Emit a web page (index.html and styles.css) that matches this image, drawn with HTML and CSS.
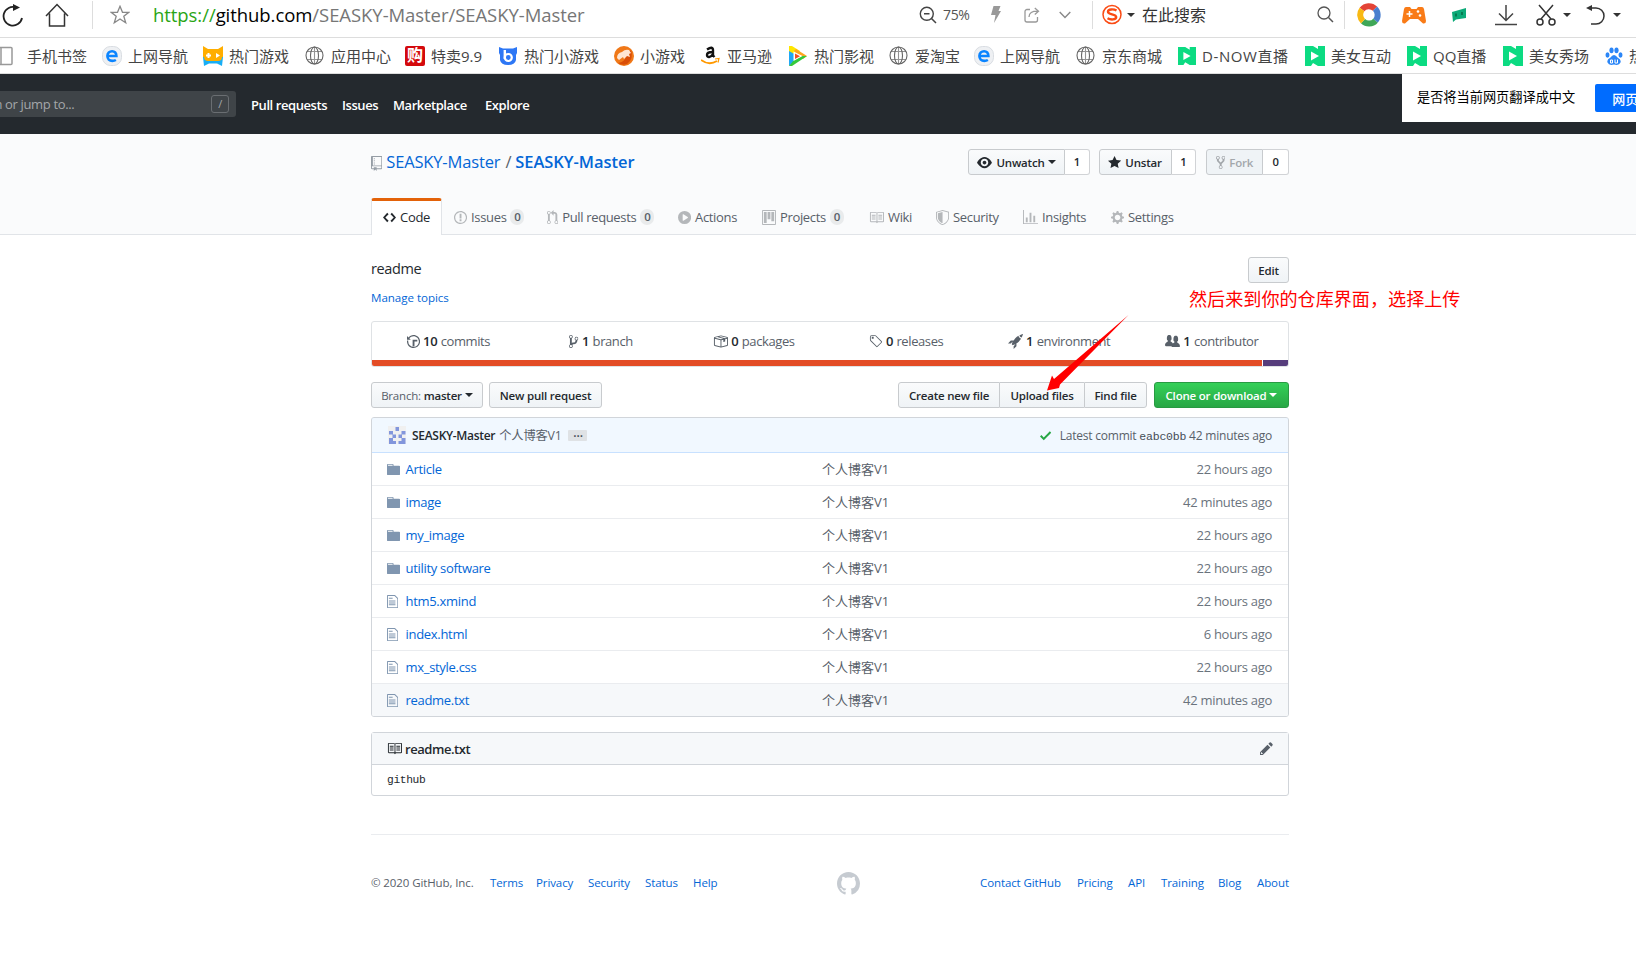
FILE: index.html
```html
<!DOCTYPE html>
<html lang="en">
<head>
    <meta charset="utf-8">
    <title>SEASKY-Master/SEASKY-Master</title>
    <link rel="stylesheet" href="styles.css">
</head>
<body>
    <svg class="sprite">
        <symbol id="repo" viewBox="0 0 12 16"><path d="M4 9H3V8h1v1zm0-3H3v1h1V6zm0-2H3v1h1V4zm0-2H3v1h1V2zm8-1v12c0 .55-.45 1-1 1H6v2l-1.500-1.500L3 16v-2H1c-.55 0-1-.45-1-1V1c0-.55.45-1 1-1h10c.55 0 1 .45 1 1zm-1 10H1v2h2v-1h3v1h5v-2zm0-10H2v9h9V1z"/></symbol>
        <symbol id="code" viewBox="0 0 14 16"><path d="M9.500 3L8 4.500 11.500 8 8 11.500 9.500 13 14 8 9.500 3zm-5 0L0 8l4.500 5L6 11.500 2.500 8 6 4.500 4.500 3z"/></symbol>
        <symbol id="issue" viewBox="0 0 14 16"><path d="M7 2.300c3.140 0 5.700 2.560 5.700 5.700s-2.560 5.700-5.700 5.700A5.710 5.710 0 0 1 1.300 8c0-3.140 2.560-5.700 5.700-5.700zM7 1C3.140 1 0 4.140 0 8s3.140 7 7 7 7-3.140 7-7-3.140-7-7-7zm1 3H6v5h2V4zm0 6H6v2h2v-2z"/></symbol>
        <symbol id="pull" viewBox="0 0 12 16"><path d="M11 11.280V5c-.03-.78-.34-1.470-.94-2.060C9.460 2.350 8.780 2.030 8 2H7V0L4 3l3 3V4h1c.27.02.48.11.69.31.21.2.3.42.31.69v6.280A1.993 1.993 0 0 0 10 15a1.993 1.993 0 0 0 1-3.720zm-1 2.920c-.66 0-1.200-.55-1.200-1.200 0-.65.55-1.200 1.200-1.200.65 0 1.200.55 1.200 1.200 0 .65-.55 1.200-1.200 1.200zM4 3c0-1.110-.89-2-2-2a1.993 1.993 0 0 0-1 3.720v6.560A1.993 1.993 0 0 0 2 15a1.993 1.993 0 0 0 1-3.720V4.720c.59-.34 1-.98 1-1.720zm-.8 10c0 .66-.55 1.200-1.200 1.200-.65 0-1.200-.55-1.200-1.200 0-.65.55-1.200 1.200-1.200.65 0 1.200.55 1.200 1.200zM2 4.200C1.340 4.200.8 3.650.8 3c0-.65.55-1.200 1.200-1.200.65 0 1.200.55 1.200 1.200 0 .65-.55 1.200-1.200 1.200z"/></symbol>
        <symbol id="play" viewBox="0 0 14 16"><path fill-rule="evenodd" d="M14 8A7 7 0 1 1 0 8a7 7 0 0 1 14 0zm-8.223 3.482l4.599-3.066a.5.5 0 0 0 0-.832L5.777 4.518A.5.5 0 0 0 5 4.934v6.132a.5.5 0 0 0 .777.416z"/></symbol>
        <symbol id="project" viewBox="0 0 15 16"><path fill-rule="evenodd" d="M10 12h3V2h-3v10zm-4-2h3V2H6v8zm-4 4h3V2H2v12zm-1 1h13V1H1v14zM14 0H1a1 1 0 0 0-1 1v14a1 1 0 0 0 1 1h13a1 1 0 0 0 1-1V1a1 1 0 0 0-1-1z"/></symbol>
        <symbol id="book" viewBox="0 0 16 16"><path fill-rule="evenodd" d="M3 5h4v1H3V5zm0 3h4V7H3v1zm0 2h4V9H3v1zm11-5h-4v1h4V5zm0 2h-4v1h4V7zm0 2h-4v1h4V9zm2-6v9c0 .55-.45 1-1 1H9.500l-1 1-1-1H2c-.55 0-1-.45-1-1V3c0-.55.45-1 1-1h5.500l1 1 1-1H15c.55 0 1 .45 1 1zm-8 .5L7.500 3H2v9h6V3.500zm7-.5H9.500l-.5.5V12h6V3z"/></symbol>
        <symbol id="shield" viewBox="0 0 14 16"><path fill-rule="evenodd" d="M0 2l7-2 7 2v6.020C14 12.690 8.690 16 7 16c-1.690 0-7-3.310-7-7.980V2zm1 .75L7 1l6 1.750v5.268C13 12.104 8.449 15 7 15c-1.449 0-6-2.896-6-6.982V2.750zm1 .75L7 2v12c-1.207 0-5-2.482-5-5.985V3.500z"/></symbol>
        <symbol id="graph" viewBox="0 0 16 16"><path d="M16 14v1H0V0h1v14h15zM5 13H3V8h2v5zm4 0H7V3h2v10zm4 0h-2V6h2v7z"/></symbol>
        <symbol id="gear" viewBox="0 0 14 16"><path fill-rule="evenodd" d="M14 8.770v-1.600l-1.940-.64-.45-1.090.88-1.840-1.130-1.130-1.810.91-1.090-.45-.69-1.920h-1.600l-.63 1.940-1.110.45-1.840-.88-1.130 1.130.91 1.810-.45 1.090L0 7.230v1.590l1.940.64.45 1.090-.88 1.840 1.130 1.130 1.810-.91 1.090.45.69 1.920h1.590l.63-1.940 1.110-.45 1.840.88 1.130-1.130-.92-1.810.47-1.090L14 8.750v.02zM7 11c-1.660 0-3-1.340-3-3s1.340-3 3-3 3 1.340 3 3-1.340 3-3 3z"/></symbol>
        <symbol id="eye" viewBox="0 0 16 16"><path fill-rule="evenodd" d="M8.060 2C3 2 0 8 0 8s3 6 8.060 6C13 14 16 8 16 8s-3-6-7.940-6zM8 12c-2.200 0-4-1.780-4-4 0-2.200 1.800-4 4-4 2.220 0 4 1.800 4 4 0 2.220-1.780 4-4 4zm2-4c0 1.110-.89 2-2 2-1.110 0-2-.89-2-2 0-1.110.89-2 2-2 1.110 0 2 .89 2 2z"/></symbol>
        <symbol id="star" viewBox="0 0 14 16"><path d="M14 6l-4.900-.64L7 1 4.900 5.360 0 6l3.600 3.260L2.670 14 7 11.670 11.330 14l-.93-4.740L14 6z"/></symbol>
        <symbol id="fork" viewBox="0 0 10 16"><path d="M8 1a1.993 1.993 0 0 0-1 3.720V6L5 8 3 6V4.720A1.993 1.993 0 0 0 2 1a1.993 1.993 0 0 0-1 3.720V6.500l3 3v1.780A1.993 1.993 0 0 0 5 15a1.993 1.993 0 0 0 1-3.720V9.500l3-3V4.720A1.993 1.993 0 0 0 8 1zM2 4.200C1.340 4.200.8 3.650.8 3c0-.65.55-1.200 1.200-1.200.65 0 1.200.55 1.200 1.200 0 .65-.55 1.200-1.200 1.200zm3 10c-.66 0-1.200-.55-1.200-1.200 0-.65.55-1.200 1.200-1.200.65 0 1.200.55 1.200 1.200 0 .65-.55 1.200-1.200 1.200zm3-10c-.66 0-1.200-.55-1.200-1.200 0-.65.55-1.200 1.200-1.200.65 0 1.200.55 1.200 1.200 0 .65-.55 1.200-1.200 1.200z"/></symbol>
        <symbol id="history" viewBox="0 0 14 16"><path d="M8 13H6V6h5v2H8v5zM7 1C4.810 1 2.870 2.020 1.590 3.590L0 2v4h4L2.500 4.500C3.550 3.170 5.170 2.300 7 2.300c3.140 0 5.700 2.560 5.700 5.700s-2.560 5.700-5.700 5.700A5.710 5.710 0 0 1 1.300 8c0-.34.03-.67.09-1H.08C.03 7.330 0 7.660 0 8c0 3.860 3.140 7 7 7s7-3.140 7-7-3.140-7-7-7z"/></symbol>
        <symbol id="branch" viewBox="0 0 10 16"><path d="M10 5c0-1.110-.89-2-2-2a1.993 1.993 0 0 0-1 3.720v.3c-.02.52-.23.98-.63 1.380-.4.4-.86.61-1.380.63-.83.02-1.480.16-2 .45V4.720a1.993 1.993 0 0 0-1-3.720C.88 1 0 1.890 0 3a2 2 0 0 0 1 1.720v6.560c-.59.35-1 .99-1 1.720 0 1.110.89 2 2 2 1.110 0 2-.89 2-2 0-.53-.2-1-.53-1.360.09-.06.48-.41.59-.47.25-.11.56-.17.94-.17 1.050-.05 1.950-.45 2.750-1.250S8.950 7.770 9 6.730h-.02C9.590 6.370 10 5.730 10 5zM2 1.800c.66 0 1.200.55 1.200 1.200 0 .65-.55 1.200-1.200 1.200C1.350 4.200.8 3.650.8 3c0-.65.55-1.200 1.200-1.200zm0 12.410c-.66 0-1.200-.55-1.200-1.200 0-.65.55-1.200 1.200-1.200.65 0 1.200.55 1.200 1.200 0 .65-.55 1.200-1.200 1.200zm6-8c-.66 0-1.200-.55-1.200-1.200 0-.65.55-1.200 1.200-1.200.65 0 1.200.55 1.200 1.200 0 .65-.55 1.200-1.200 1.200z"/></symbol>
        <symbol id="package" viewBox="0 0 16 16"><path fill-rule="evenodd" d="M1 4.270v7.470c0 .45.3.84.75.97l6.500 1.730c.16.05.34.05.5 0l6.500-1.730c.45-.13.75-.52.75-.97V4.270c0-.45-.3-.84-.75-.97l-6.500-1.740a1.400 1.400 0 0 0-.5 0L1.750 3.300c-.45.13-.75.52-.75.97zm7 9.090l-6-1.590V5l6 1.610v6.750zM2 4l2.500-.67L11 5.060l-2.500.67L2 4zm13 7.770l-6 1.590V6.610l2-.55V8.500l2-.53V5.530L15 5v6.770zm-2-7.240L6.500 2.800l2-.53L15 4l-2 .53z"/></symbol>
        <symbol id="tag" viewBox="0 0 14 16"><path fill-rule="evenodd" d="M7.685 1.720a2.490 2.490 0 0 0-1.760-.726H3.480A2.500 2.500 0 0 0 .994 3.480v2.456c0 .656.269 1.292.726 1.760l6.024 6.024a.99.99 0 0 0 1.402 0l4.563-4.563a.99.99 0 0 0 0-1.402L7.685 1.720zM2.366 7.048A1.540 1.540 0 0 1 1.900 5.925V3.480c0-.874.716-1.580 1.580-1.580h2.456c.418 0 .825.159 1.123.467l6.104 6.094-4.702 4.702-6.094-6.114zm.626-4.066h1.989v1.989H2.982V2.982h.01z"/></symbol>
        <symbol id="rocket" viewBox="0 0 16 16"><path d="M12.170 3.830c-.27-.27-.47-.55-.63-.88-.16-.31-.27-.66-.34-1.020-.58.33-1.160.7-1.730 1.130-.58.44-1.140.94-1.690 1.480-.7.7-1.330 1.810-1.780 2.450H3L0 10h3l2-2c-.34.77-1.020 2.980-1 3l1 1c.02.02 2.230-.64 3-1l-2 2v3l3-3v-3c.64-.45 1.750-1.090 2.450-1.780.55-.55 1.050-1.130 1.470-1.700.44-.58.81-1.160 1.140-1.720-.36-.08-.7-.19-1.030-.34a3.390 3.390 0 0 1-.86-.63zM16 0s-.09.38-.3 1.060c-.2.7-.55 1.580-1.060 2.660-.7-.08-1.270-.33-1.660-.72-.39-.39-.63-.94-.7-1.640C13.360.84 14.230.48 14.920.28 15.620.08 16 0 16 0z"/></symbol>
        <symbol id="people" viewBox="0 0 16 16"><path d="M16 12.999c0 .439-.45 1-1 1H7.995c-.539 0-.994-.447-.995-.999H1c-.54 0-1-.561-1-1 0-2.634 3-4 3-4s.229-.409 0-1c-.841-.621-1.058-.59-1-3 .058-2.419 1.367-3 2.500-3s2.442.58 2.500 3c.058 2.410-.159 2.379-1 3-.229.59 0 1 0 1s1.549.711 2.420 2.088C9.196 9.369 10 8.999 10 8.999s.229-.409 0-1c-.841-.62-1.058-.59-1-3 .058-2.419 1.367-3 2.500-3s2.437.581 2.495 3c.059 2.410-.158 2.380-1 3-.229.59 0 1 0 1s3.005 1.366 3.005 4z"/></symbol>
        <symbol id="check" viewBox="0 0 12 16"><path d="M12 5l-8 8-4-4 1.500-1.500L4 10l6.500-6.500L12 5z"/></symbol>
        <symbol id="folder" viewBox="0 0 14 16"><path fill-rule="evenodd" d="M13 4H7V3c0-.66-.31-1-1-1H1c-.55 0-1 .45-1 1v10c0 .55.45 1 1 1h12c.55 0 1-.45 1-1V5c0-.55-.45-1-1-1zM6 4H1V3h5v1z"/></symbol>
        <symbol id="file" viewBox="0 0 12 16"><path fill-rule="evenodd" d="M6 5H2V4h4v1zM2 8h7V7H2v1zm0 2h7V9H2v1zm0 2h7v-1H2v1zm10-7.500V14c0 .55-.45 1-1 1H1c-.55 0-1-.45-1-1V2c0-.55.45-1 1-1h7.500L12 4.500zM11 5L8 2H1v12h10V5z"/></symbol>
        <symbol id="pencil" viewBox="0 0 14 16"><path fill-rule="evenodd" d="M0 12v3h3l8-8-3-3-8 8zm3 2H1v-2h1v1h1v1zm10.300-9.300L12 6 9 3l1.300-1.300a.996.996 0 0 1 1.410 0l1.590 1.590c.39.39.39 1.020 0 1.410z"/></symbol>
        <symbol id="github" viewBox="0 0 16 16"><path d="M8 0C3.580 0 0 3.580 0 8c0 3.540 2.290 6.530 5.470 7.590.4.07.55-.17.55-.38 0-.19-.01-.82-.01-1.490-2.010.37-2.530-.49-2.690-.94-.09-.23-.48-.94-.82-1.130-.28-.15-.68-.52-.01-.53.63-.01 1.080.58 1.230.82.72 1.210 1.870.87 2.330.66.07-.52.28-.87.51-1.070-1.780-.2-3.640-.89-3.640-3.950 0-.87.31-1.590.82-2.150-.08-.2-.36-1.020.08-2.120 0 0 .67-.21 2.200.82.64-.18 1.320-.27 2-.27.68 0 1.360.09 2 .27 1.530-1.040 2.200-.82 2.200-.82.44 1.100.16 1.920.08 2.120.51.56.82 1.270.82 2.150 0 3.070-1.870 3.750-3.650 3.950.29.25.54.73.54 1.480 0 1.070-.01 1.930-.01 2.200 0 .21.15.46.55.38A8.013 8.013 0 0 0 16 8c0-4.420-3.580-8-8-8z"/></symbol>
        <symbol id="globe" viewBox="0 0 20 20"><g fill="none" stroke="#666" stroke-width="1.100"><circle cx="9.500" cy="9.500" r="8.500"/><ellipse cx="9.500" cy="9.500" rx="4" ry="8.500"/><path d="M9.500 1v17M2 5.500h15M2 13.500h15" stroke-opacity=".7"/></g></symbol>
        <symbol id="edge" viewBox="0 0 20 20"><rect x=".5" y=".5" width="19" height="19" rx="8" fill="#eef0f3" stroke="#d9dde2"/><path d="M5.600 10h8.800c0-3-1.800-4.800-4.300-4.800S5.400 7.200 5.400 10s2 4.900 4.900 4.900c1.400 0 2.600-.3 3.600-.9" fill="none" stroke="#0a84ff" stroke-width="2.600"/></symbol>
        <symbol id="nlive" viewBox="0 0 20 20"><path d="M0 0h8l5 3V0h7v20h-7l-5-3-2 3H0z" fill="#0cdb82"/><path d="M6 5.500l8 4.500-8 4.500z" fill="#fff"/></symbol>
    </svg>

    <div class="address-bar">
        <div><svg class="ic-refresh" viewBox="0 0 22 24"><path d="M14 4.500A9.300 9.300 0 1 0 20 15" fill="none" stroke="#222" stroke-width="1.800"/><path d="M11 1l7 3.500-7 3.500z" fill="#222"/></svg></div>
        <div><svg width="24" height="24" viewBox="0 0 24 24"><path d="M1 13L12 1.500 23 13M4.500 10.500v12.500h15V10.500" fill="none" stroke="#333" stroke-width="1.500"/></svg></div>
        <div class="divider"></div>
        <div><svg width="20" height="20" viewBox="0 0 20 20"><path d="M10 1.300l2.500 6h6.300l-5 4 1.900 6.500L10 14l-5.700 3.800 1.900-6.500-5-4h6.300z" fill="none" stroke="#888" stroke-width="1.300"/></svg></div>
        <div class="url"><span class="scheme">https://</span><span class="host">github.com</span>/SEASKY-Master/SEASKY-Master</div>
        <div><svg width="18" height="18" viewBox="0 0 18 18"><path d="M12.500 12.500L17 17M5 7.800h5.500" stroke="#444" stroke-width="1.500"/><circle cx="7.800" cy="7.800" r="6.500" fill="none" stroke="#444" stroke-width="1.400"/></svg></div>
        <div class="zoom">75%</div>
        <div><svg width="10" height="17" viewBox="0 0 10 17"><path d="M2.500 0h7L7.500 5H10L3 17l1.500-8H0z" fill="#999"/></svg></div>
        <div><svg width="16" height="16" viewBox="0 0 16 16"><path d="M6 2.500H3a2 2 0 0 0-2 2V13a2 2 0 0 0 2 2h8.500a2 2 0 0 0 2-2v-3M5 10c0-4 3-6 9-5.800M10.800 1l3.700 3.300-3.700 3.300" fill="none" stroke="#999" stroke-width="1.300"/></svg></div>
        <div><svg width="12" height="8" viewBox="0 0 12 8"><path d="M.7 1L6 6.500 11.300 1" fill="none" stroke="#888" stroke-width="1.400"/></svg></div>
        <div class="divider"></div>
        <div class="sogou"><svg width="20" height="21" viewBox="0 0 20 21"><circle cx="10" cy="10.500" r="9" fill="none" stroke="#fa4b14" stroke-width="1.500"/><path d="M14.500 6.500C12 5 6 4.800 6 7.700c0 3.200 8.200 2 8.200 5.300 0 3-5.700 3-8.700 1.200" fill="none" stroke="#fa4b14" stroke-width="2.400"/></svg><i class="caret"></i></div>
        <div class="search-hint">在此搜索</div>
        <div><svg width="17" height="17" viewBox="0 0 17 17"><circle cx="7" cy="7" r="6" fill="none" stroke="#555" stroke-width="1.300"/><path d="M11.500 11.500l4.500 4.500" stroke="#555" stroke-width="1.500"/></svg></div>
        <div class="divider"></div>
        <div><svg width="24" height="24" viewBox="0 0 24 24"><g fill="none" stroke-width="6"><path d="M5 6.500A8.700 8.700 0 0 1 18 5.700" stroke="#e34336"/><path d="M18 5.700a8.700 8.700 0 0 1 .5 12" stroke="#4a7fce"/><path d="M18.500 17.700a8.700 8.700 0 0 1-12.500.5" stroke="#3fa757"/><path d="M6 18.200A8.700 8.700 0 0 1 5 6.500" stroke="#f8b914"/></g></svg></div>
        <div><svg width="24" height="18" viewBox="0 0 24 18"><path d="M4 1h4l1.500 2h5L16 1h4q1.500 0 2 2l2 12q0 3-3 2.500L16 13H8l-5 4.500Q0 18 0 15L2 3q.5-2 2-2z" fill="#f97b17"/><path d="M7.500 5v6M4.500 8h6" stroke="#fff" stroke-width="1.500"/><circle cx="16" cy="5.500" r="1.300" fill="#fff"/><circle cx="18" cy="9.500" r="1.300" fill="#fff"/></svg></div>
        <div><svg width="14" height="16" viewBox="0 0 14 16"><path d="M0 5l14-4v10L4 12.500 1 15z" fill="#0caa78"/><path d="M4 6.500v3M10 5v3" stroke="#067a50" stroke-width="2"/></svg></div>
        <div><svg width="22" height="22" viewBox="0 0 22 22"><path d="M11 1v15M4 9.500l7 7 7-7M0 20.500h22" fill="none" stroke="#444" stroke-width="1.500"/></svg></div>
        <div class="tool"><svg width="20" height="22" viewBox="0 0 20 22"><g fill="none" stroke="#333" stroke-width="1.500"><path d="M3 1l12 14M17 1L5 15"/><circle cx="4" cy="18" r="3"/><circle cx="16" cy="18" r="3"/></g></svg><i class="caret"></i></div>
        <div class="tool"><svg width="20" height="20" viewBox="0 0 20 20"><path d="M3 3h7a8 8 0 0 1 0 16H5" fill="none" stroke="#333" stroke-width="1.500"/><path d="M0 3l6-3v6z" fill="#333"/></svg><i class="caret"></i></div>
    </div>

    <div class="bookmarks">
        <span><svg viewBox="0 0 20 20"><rect x="-4" y="1.500" width="16" height="17" rx="1" fill="none" stroke="#999" stroke-width="1.500"/><path d="M1 1v18" stroke="#999" stroke-width="1.500"/></svg>手机书签</span>
        <span><svg><use href="#edge"/></svg>上网导航</span>
        <span><svg viewBox="0 0 20 20"><path d="M0 0l5 3h10l5-3v11H0z" fill="#ffae00"/><path d="M0 11h20l-1 9-5-2.500H6L1 20z" fill="#18aef5"/><rect x="1" y="4" width="18" height="11" rx="4" fill="#ffae00"/><path d="M5.500 7v5M3 9.500h5" stroke="#fff" stroke-width="2"/><path d="M13 7l4 2.500-4 2.500z" fill="#fff"/></svg>热门游戏</span>
        <span><svg><use href="#globe"/></svg>应用中心</span>
        <span><b class="gou">购</b>特卖9.9</span>
        <span><svg viewBox="0 0 20 20"><path d="M1 1l4 1.500h10L19 1v6l-1 2v5q-1 5-8 5t-8-5V9L1 7z" fill="#2d77f5"/><path d="M6.800 4v9" stroke="#fff" stroke-width="2.400"/><circle cx="10.300" cy="11.500" r="3.500" fill="none" stroke="#fff" stroke-width="2.200"/></svg>热门小游戏</span>
        <span><svg viewBox="0 0 20 20"><circle cx="10" cy="10" r="10" fill="#f07818"/><path d="M17 4q3 9-4 14-5 2-9-1 7-1 8-7z" fill="#d94e08"/><path d="M3 12q0-5 5-6 3-3 7-2l2 3-2 1 1 3-3-1-3 3-1-2-4 3z" fill="#ffe6d2"/></svg>小游戏</span>
        <span><svg viewBox="0 0 20 20"><path d="M6 3.500Q12-.5 12 4.500v5l1.500 1.500M11.500 6Q6 6 6 9c0 3 4 2.500 5.500-.5" fill="none" stroke="#111" stroke-width="2.400"/><path d="M0 14q8 6 16 1" fill="none" stroke="#f90" stroke-width="1.800"/><path d="M14 13l4-.5-1 4" fill="none" stroke="#f90" stroke-width="1.200"/></svg>亚马逊</span>
        <span><svg viewBox="0 0 20 20"><path d="M1 0h3l8 5-4 5-7-4z" fill="#ffe600"/><path d="M8 3l11 7-4 3L6 5z" fill="#ffa51f"/><path d="M1 5v15l7-5V9z" fill="#20a8f5"/><path d="M19 10L4 20H1l5-6 8-4z" fill="#35c93b"/><path d="M5.500 5.500l9 4.500-9 5z" fill="#fff"/><path d="M7 7.500l5 2.700-5 2.800z" fill="#f25022"/></svg>热门影视</span>
        <span><svg><use href="#globe"/></svg>爱淘宝</span>
        <span><svg><use href="#edge"/></svg>上网导航</span>
        <span><svg><use href="#globe"/></svg>京东商城</span>
        <span class="dnow"><svg><use href="#nlive"/></svg>D-NOW直播</span>
        <span><svg><use href="#nlive"/></svg>美女互动</span>
        <span><svg><use href="#nlive"/></svg>QQ直播</span>
        <span><svg><use href="#nlive"/></svg>美女秀场</span>
        <span><svg class="baidu" viewBox="0 0 18 18"><g fill="#2b86f7"><ellipse cx="2.500" cy="8" rx="2" ry="2.700"/><ellipse cx="6.500" cy="3.300" rx="2.100" ry="2.900"/><ellipse cx="11.500" cy="3.300" rx="2.100" ry="2.900"/><ellipse cx="15.500" cy="8" rx="2" ry="2.700"/><path d="M9 8q2 0 3.500 2.500 4 2 3 5Q14 19 9 17.500 4 19 2.500 15.500q-1-3 3-5Q7 8 9 8z"/></g><path d="M5.500 13h2v3h-2zM10 12.500V16h2.500v-3.500" fill="none" stroke="#fff"/></svg>热搜</span>
    </div>

    <div class="site-header">
        <div class="site-search"><span>Search or jump to...</span><kbd>/</kbd></div>
        <nav class="site-nav">
            <a>Pull requests</a><a>Issues</a><a>Marketplace</a><a>Explore</a>
        </nav>
    </div>
    <div class="translate"><span>是否将当前网页翻译成中文</span><button>网页翻译</button></div>

    <div class="repo-head">
        <div class="container">
            <div class="title-row">
                <h1><svg class="oi w12"><use href="#repo"/></svg><a>SEASKY-Master</a><i>/</i><a class="strong">SEASKY-Master</a></h1>
                <div class="social watch"><span class="btn"><svg class="oi w16"><use href="#eye"/></svg>Unwatch<i class="caret"></i></span><span class="count">1</span></div>
                <div class="social unstar"><span class="btn"><svg class="oi w14"><use href="#star"/></svg>Unstar</span><span class="count">1</span></div>
                <div class="social forks"><span class="btn disabled"><svg class="oi w10"><use href="#fork"/></svg>Fork</span><span class="count">0</span></div>
            </div>
            <nav class="tabs">
                <a class="selected"><svg class="oi w14"><use href="#code"/></svg>Code</a>
                <a><svg class="oi w14"><use href="#issue"/></svg>Issues<b>0</b></a>
                <a><svg class="oi w12"><use href="#pull"/></svg>Pull requests<b>0</b></a>
                <a><svg class="oi w14"><use href="#play"/></svg>Actions</a>
                <a><svg class="oi w15"><use href="#project"/></svg>Projects<b>0</b></a>
                <a><svg class="oi w16"><use href="#book"/></svg>Wiki</a>
                <a><svg class="oi w14"><use href="#shield"/></svg>Security</a>
                <a><svg class="oi w16"><use href="#graph"/></svg>Insights</a>
                <a><svg class="oi w14"><use href="#gear"/></svg>Settings</a>
            </nav>
        </div>
    </div>

    <div class="container main">
        <div class="about">
            <div>
                <p class="desc">readme</p>
                <a class="topics">Manage topics</a>
            </div>
            <span class="btn edit">Edit</span>
        </div>

        <div class="summary">
            <ul>
                <li><svg class="oi w14"><use href="#history"/></svg><b>10</b> commits</li>
                <li><svg class="oi w10"><use href="#branch"/></svg><b>1</b> branch</li>
                <li><svg class="oi w16"><use href="#package"/></svg><b>0</b> packages</li>
                <li><svg class="oi w14"><use href="#tag"/></svg><b>0</b> releases</li>
                <li><svg class="oi w16"><use href="#rocket"/></svg><b>1</b> environment</li>
                <li><svg class="oi w16"><use href="#people"/></svg><b>1</b> contributor</li>
            </ul>
            <div class="langs"><span class="html"></span><span class="css"></span></div>
        </div>

        <div class="file-nav">
            <span class="btn branch"><em>Branch:</em>&nbsp;master<i class="caret"></i></span>
            <span class="btn new-pr">New pull request</span>
            <div class="btn-group">
                <span class="btn">Create new file</span><span class="btn">Upload files</span><span class="btn">Find file</span>
            </div>
            <span class="btn primary">Clone or download<i class="caret"></i></span>
        </div>

        <div class="files">
            <div class="commit">
                <svg class="avatar" viewBox="0 0 18 18"><rect width="18" height="18" fill="#f0f0f0"/><path fill="#8296dc" d="M7.500 1h3.500v4H7.500zM1 5h4v3.500H1zM13.500 5h4v3.500h-4zM4.500 8.500H8V12H4.500zM10.500 8.500H14V12h-3.500zM1 12h4v3h3v3H1zM13.500 12h4v6h-7v-3h3z"/></svg>
                <b>SEASKY-Master</b><span class="msg">个人博客V1</span><span class="dots">…</span>
                <svg class="oi w12 ok"><use href="#check"/></svg>
                <span>Latest commit <code>eabc0bb</code> 42 minutes ago</span>
            </div>
            <div class="row"><svg class="oi w14"><use href="#folder"/></svg><a>Article</a><span>个人博客V1</span><time>22 hours ago</time></div>
            <div class="row"><svg class="oi w14"><use href="#folder"/></svg><a>image</a><span>个人博客V1</span><time>42 minutes ago</time></div>
            <div class="row"><svg class="oi w14"><use href="#folder"/></svg><a>my_image</a><span>个人博客V1</span><time>22 hours ago</time></div>
            <div class="row"><svg class="oi w14"><use href="#folder"/></svg><a>utility software</a><span>个人博客V1</span><time>22 hours ago</time></div>
            <div class="row"><svg class="oi w12"><use href="#file"/></svg><a>htm5.xmind</a><span>个人博客V1</span><time>22 hours ago</time></div>
            <div class="row"><svg class="oi w12"><use href="#file"/></svg><a>index.html</a><span>个人博客V1</span><time>6 hours ago</time></div>
            <div class="row"><svg class="oi w12"><use href="#file"/></svg><a>mx_style.css</a><span>个人博客V1</span><time>22 hours ago</time></div>
            <div class="row hover"><svg class="oi w12"><use href="#file"/></svg><a>readme.txt</a><span>个人博客V1</span><time>42 minutes ago</time></div>
        </div>

        <div class="readme">
            <div class="readme-head"><svg class="oi w16"><use href="#book"/></svg><b>readme.txt</b><svg class="oi w14 edit-icon"><use href="#pencil"/></svg></div>
            <pre>github</pre>
        </div>

        <footer>
            <div class="foot-left"><span>© 2020 GitHub, Inc.</span><a>Terms</a><a>Privacy</a><a>Security</a><a>Status</a><a>Help</a></div>
            <svg class="mark"><use href="#github"/></svg>
            <div class="foot-right"><a>Contact GitHub</a><a>Pricing</a><a>API</a><a>Training</a><a>Blog</a><a>About</a></div>
        </footer>
    </div>

    <div class="note">然后来到你的仓库界面，选择上传</div>
    <svg class="arrow" viewBox="0 0 82 76"><path d="M81.500 0L13 69.500 12 73 0 75.500 5 60.500 7 64z" fill="#f00"/></svg>
</body>
</html>
```
FILE: styles.css
```css
* {
    box-sizing: border-box;
}
body {
    margin: 0;
    width: 1636px;
    height: 974px;
    overflow: hidden;
    position: relative;
    background: #fff;
    color: #24292e;
    font-family: "Open Sans", "Noto Sans CJK SC", sans-serif;
    font-size: 13px;
    letter-spacing: -0.35px;
    white-space: nowrap;
}
b, .strong {
    font-weight: 600;
}
i, em {
    font-style: normal;
}
svg {
    display: block;
    flex: none;
}
.sprite {
    position: absolute;
    width: 0;
    height: 0;
}
a {
    color: #0366d6;
}
.caret {
    display: block;
    flex: none;
    border: 4px solid transparent;
    border-top-color: currentColor;
    border-bottom: 0;
}

/* browser chrome */
.address-bar {
    height: 38px;
    border-bottom: 1px solid #ddd;
    display: grid;
    grid-template-columns: 45px 47px 18px 43px 766px 24px 48px 33px 35px 33px 10px 40px 175px 27px 13px 45px 50px 43px 41px 50px 50px;
    padding-bottom: 8px;
    align-items: center;
    color: #333;
}
.ic-refresh {
    width: 22px;
    height: 24px;
    margin-left: 2px;
}
.divider {
    width: 1px;
    height: 28px;
    background: #ddd;
}
.url {
    font-size: 18.5px;
    letter-spacing: -0.06px;
    color: #767676;
}
.scheme {
    color: #2aa515;
}
.host {
    color: #000;
}
.zoom {
    font-size: 14px;
    color: #555;
}
.sogou, .tool {
    display: flex;
    align-items: center;
    gap: 5px;
}
.tool {
    gap: 7px;
}
.search-hint {
    margin-top: -2px;
    font-size: 16px;
    letter-spacing: 0;
}
.bookmarks {
    height: 36px;
    border-bottom: 1px solid #ddd;
    display: grid;
    grid-template-columns: 102px 101px 102px 100px 93px 116px 87px 87px 101px 85px 102px 102px 127px 102px 96px 102px 60px;
    align-items: center;
    font-size: 15px;
    letter-spacing: 0;
    color: #444;
}
.bookmarks span {
    display: flex;
    align-items: center;
    gap: 6px;
}
.bookmarks span:first-child {
    gap: 7px;
}
.bookmarks svg {
    width: 20px;
    height: 20px;
}
.bookmarks .dnow {
    letter-spacing: 0.6px;
}
.bookmarks .dnow svg {
    width: 18px;
    height: 18px;
}
.bookmarks svg.baidu {
    width: 18px;
    height: 18px;
}
.gou {
    width: 20px;
    height: 20px;
    border-radius: 2px;
    background: #d4090c;
    color: #fff;
    font-size: 16px;
    line-height: 19px;
    text-align: center;
}

/* site header */
.site-header {
    height: 60px;
    background: #24292e;
    display: flex;
    align-items: center;
}
.site-search {
    width: 236px;
    height: 26px;
    border-radius: 0 3px 3px 0;
    background: #3f4448;
    color: #a4a7aa;
    display: flex;
    align-items: center;
    justify-content: space-between;
    padding-right: 7px;
    overflow: hidden;
}
.site-search span {
    margin-left: -37px;
}
.site-search kbd {
    width: 18px;
    height: 18px;
    border: 1px solid #6a6e72;
    border-radius: 3px;
    font: 11px/16px "Open Sans", sans-serif;
    text-align: center;
}
.site-nav {
    display: grid;
    grid-template-columns: 91px 51px 92px 60px;
    margin-left: 15px;
    padding-top: 2px;
    letter-spacing: -0.42px;
}
.site-nav a {
    color: #fff;
    font-weight: 600;
}
.translate {
    position: absolute;
    left: 1402px;
    top: 74px;
    width: 234px;
    height: 48px;
    padding-left: 15px;
    background: #fff;
    color: #000;
    display: flex;
    align-items: center;
    gap: 20px;
    font-size: 13.2px;
    letter-spacing: 0;
    overflow: hidden;
}
.translate span {
    padding-bottom: 4px;
}
.translate button {
    flex: none;
    width: 86px;
    height: 28px;
    border: 0;
    border-radius: 2px;
    background: #006cff;
    color: #fff;
    font: 500 13px "Noto Sans CJK SC", sans-serif;
}

/* repository header */
.container {
    width: 918px;
    margin-left: 371px;
}
.repo-head {
    height: 101px;
    background: #fafbfc;
    border-bottom: 1px solid #e1e4e8;
}
.title-row {
    height: 64px;
    padding-top: 15px;
    display: flex;
    align-items: flex-start;
}
.title-row h1 {
    margin: -1px auto 0 0;
    display: flex;
    align-items: center;
    height: 26px;
    font-size: 16.5px;
    font-weight: 400;
    letter-spacing: -0.15px;
}
.title-row h1 .oi {
    fill: #959da5;
    margin: 5px 4px 0 0;
}
.title-row h1 i {
    padding: 0 4px 0 5px;
    color: #586069;
}
.title-row .strong {
    letter-spacing: -0.05px;
}
.oi {
    height: 15px;
    fill: currentColor;
}
.w10 { width: 9.4px; }
.w12 { width: 11.25px; }
.w14 { width: 13.1px; }
.w15 { width: 14px; }
.w16 { width: 15px; }
.btn {
    height: 26px;
    display: flex;
    align-items: center;
    justify-content: center;
    border: 1px solid #c8cbce;
    border-radius: 3px;
    background: linear-gradient(#fafbfc, #eff3f6);
    font-size: 11.5px;
    font-weight: 600;
    letter-spacing: -0.2px;
}
.btn em {
    font-weight: 400;
    color: #586069;
}
.btn .caret {
    margin-left: 3px;
}
.social {
    display: flex;
    margin-left: 10px;
}
.social .btn {
    border-radius: 3px 0 0 3px;
    gap: 4px;
}
.social .btn .caret {
    margin-left: -1px;
}
.watch .btn { width: 97px; }
.unstar { margin-left: 9px; }
.unstar .btn { width: 73px; }
.unstar .count, .watch .count { width: 24.5px; }
.forks .btn { width: 57px; }
.social .disabled {
    color: #a3a7ab;
    background: #eff3f6;
}
.count {
    width: 26px;
    height: 26px;
    line-height: 24px;
    border: 1px solid #d1d3d6;
    border-left: 0;
    border-radius: 0 3px 3px 0;
    background: #fff;
    text-align: center;
    font-size: 11.25px;
    font-weight: 600;
}
.tabs {
    display: grid;
    grid-template-columns: 83px 93px 131px 84px 107px 67px 87px 88px 80px;
    height: 37px;
}
.tabs a {
    display: flex;
    align-items: center;
    gap: 4px;
    padding-top: 1px;
    color: #586069;
}
.tabs a .oi {
    fill: #b4b7ba;
    margin-top: 1px;
}
.tabs .selected {
    width: 71px;
    padding: 0 0 2px 11px;
    border: 1px solid #e1e4e8;
    border-top: 3px solid #e36209;
    border-bottom: 0;
    border-radius: 3px 3px 0 0;
    background: #fff;
    color: #24292e;
}
.tabs .selected .oi {
    fill: #24292e;
}
.tabs b {
    min-width: 14px;
    height: 16px;
    border-radius: 8px;
    background: #e9ebec;
    font-size: 11.5px;
    line-height: 16px;
    text-align: center;
}

/* repository body */
.about {
    height: 86px;
    padding-top: 22px;
    display: flex;
    justify-content: space-between;
}
.desc {
    margin: 0;
    font-size: 14.5px;
    line-height: 24px;
    letter-spacing: -0.4px;
}
.topics {
    display: block;
    margin-top: 7px;
    font-size: 11.6px;
    line-height: 20px;
    letter-spacing: -0.05px;
}
.edit {
    width: 41px;
}
.summary {
    height: 46px;
    border: 1px solid #dfe2e5;
    border-radius: 3px;
    overflow: hidden;
}
.summary ul {
    display: grid;
    grid-template-columns: repeat(6, 1fr);
    height: 38px;
    margin: 0;
    padding: 0;
    list-style: none;
}
.summary li {
    display: flex;
    align-items: center;
    justify-content: center;
    gap: 3.5px;
    color: #586069;
    letter-spacing: -0.4px;
}
.summary b {
    color: #24292e;
}
.langs {
    display: flex;
    gap: 1px;
    height: 6px;
}
.html {
    flex: 1;
    background: #e34c26;
}
.css {
    width: 25px;
    background: #563d7c;
}
.file-nav {
    display: flex;
    padding: 15px 0 9px;
}
.branch { width: 112px; }
.new-pr { width: 113px; margin: 0 auto 0 6px; }
.btn-group {
    display: flex;
    margin-right: 7px;
}
.btn-group .btn { border-radius: 0; }
.btn-group .btn:nth-child(1) { width: 102px; border-radius: 3px 0 0 3px; }
.btn-group .btn:nth-child(2) { width: 84px; border-width: 1px 0; }
.btn-group .btn:nth-child(3) { width: 63px; border-radius: 0 3px 3px 0; }
.primary {
    width: 135px;
    color: #fff;
    border-color: #289a42;
    background: linear-gradient(#34d058, #28a745);
}
.files {
    border: 1px solid #d1d5da;
    border-radius: 3px;
    overflow: hidden;
}
.commit {
    height: 36px;
    margin: -1px -1px 0;
    padding: 0 16px;
    display: flex;
    align-items: center;
    border: 1px solid #c8e1ff;
    border-radius: 3px 3px 0 0;
    background: #f1f8ff;
    color: #586069;
    font-size: 12px;
    letter-spacing: -0.22px;
}
.commit b {
    margin: 0 4px 0 6px;
    color: #24292e;
    letter-spacing: -0.3px;
}
.msg {
    font-size: 12.3px;
}
.avatar {
    width: 18px;
    height: 18px;
}
.dots {
    width: 19px;
    height: 11px;
    margin: 0 auto 0 7px;
    background: #dfe2e5;
    color: #444d56;
    border-radius: 1px;
    font-weight: 600;
    line-height: 6px;
    text-align: center;
}
.ok {
    margin-right: 8px;
    fill: #28a745;
}
.commit code {
    font: 11.5px "Liberation Mono", monospace;
    letter-spacing: -0.2px;
    color: #444d56;
}
.row {
    height: 33px;
    padding: 0 16px 0 15px;
    display: grid;
    grid-template-columns: 18.500px 416.500px 1fr auto;
    align-items: center;
    border-top: 1px solid #eaecef;
    color: #586069;
    letter-spacing: -0.3px;
}
.commit + .row {
    height: 32px;
    border-top: 0;
}
.row span {
    margin-top: -2px;
    letter-spacing: 0;
}
.row .oi {
    fill: #8096b0;
}
.row time {
    color: #6a737d;
}
.hover {
    background: #f6f8fa;
}
.readme {
    height: 64px;
    margin-top: 15px;
    border: 1px solid #d1d5da;
    border-radius: 3px;
}
.readme-head {
    height: 32px;
    padding: 0 15px;
    display: flex;
    align-items: center;
    gap: 3px;
    border-bottom: 1px solid #d1d5da;
    background: #f6f8fa;
    letter-spacing: -0.45px;
}
.edit-icon {
    margin-left: auto;
    fill: #586069;
}
.readme pre {
    margin: 0;
    padding-left: 15px;
    font: 11.25px/30px "Liberation Mono", monospace;
}
footer {
    margin-top: 38px;
    border-top: 1px solid #eaecef;
    padding-top: 37px;
    display: grid;
    grid-template-columns: 466px 143px 309px;
    align-items: start;
    font-size: 11.5px;
    line-height: 21px;
    letter-spacing: -0.1px;
    color: #586069;
}
.foot-left {
    display: grid;
    grid-template-columns: 119px 46px 52px 57px 48px 30px;
}
.foot-right {
    display: grid;
    grid-template-columns: 97px 51px 33px 57px 39px 32px;
}
.mark {
    width: 23px;
    height: 23px;
    fill: #c6cbd1;
}

/* note laid over the page */
.note {
    position: absolute;
    left: 1189px;
    top: 285px;
    color: #f00;
    font: 18.1px/26px "Noto Sans CJK SC", sans-serif;
    letter-spacing: 0;
}
.arrow {
    position: absolute;
    left: 1047px;
    top: 315px;
    width: 82px;
    height: 76px;
}
```
